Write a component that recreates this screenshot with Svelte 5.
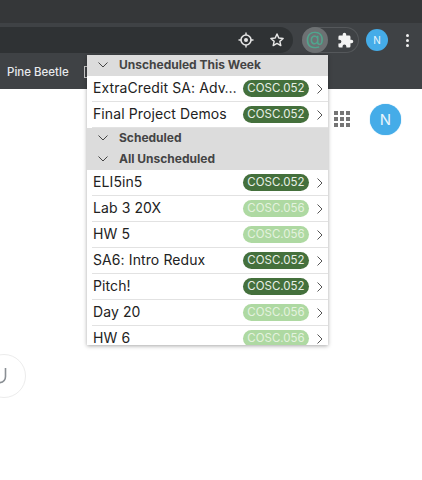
<script>
	const sectionA = [
		{ title: 'ExtraCredit SA: Adv…', course: '052' },
		{ title: 'Final Project Demos', course: '052' }
	];
	const sectionB = [
		{ title: 'ELI5in5', course: '052' },
		{ title: 'Lab 3 20X', course: '056' },
		{ title: 'HW 5', course: '056' },
		{ title: 'SA6: Intro Redux', course: '052' },
		{ title: 'Pitch!', course: '052' },
		{ title: 'Day 20', course: '056' },
		{ title: 'HW 6', course: '056' }
	];
</script>

{#snippet chevronDown()}
	<svg class="down" width="12" height="8" viewBox="0 0 12 8"><path d="M1.5 1.5 6 6l4.5-4.5" fill="none" stroke="#444" stroke-width="1" /></svg>
{/snippet}

{#snippet row(item)}
	<div class="row">
		<span class="title">{item.title}</span>
		<span class="badge" class:light={item.course === '056'}>COSC.{item.course}</span>
		<svg class="right" width="8" height="12" viewBox="0 0 8 12"><path d="M1.5 1.5 6 6l-4.5 4.5" fill="none" stroke="#555" stroke-width="1" /></svg>
	</div>
{/snippet}

<div class="page">
	<header class="chrome">
		<div class="tabstrip"></div>
		<div class="toolbar">
			<div class="omnibox">
				<span class="omni-btn">
					<svg width="18" height="18" viewBox="0 0 18 18" fill="none" stroke="#e6e6e6"><circle cx="9" cy="9" r="5" stroke-width="1.6" /><circle cx="9" cy="9" r="2" fill="#e6e6e6" stroke="none" /><path d="M9 1.5v2.5M9 14v2.5M1.5 9H4M14 9h2.5" stroke-width="1.4" /></svg>
				</span>
				<span class="omni-btn">
					<svg width="16" height="16" viewBox="0 0 24 24" fill="none" stroke="#e6e6e6" stroke-width="2.2"><path d="M12 3l2.7 6 6.5.7-4.9 4.3 1.4 6.4L12 17.1l-5.7 3.3 1.4-6.4-4.9-4.3 6.5-.7z" stroke-linejoin="round" /></svg>
				</span>
			</div>
			<div class="extensions">
				<span class="ext-at">@</span>
				<svg class="puzzle" width="17" height="17" viewBox="0 0 24 24" fill="#f4f4f4"><path d="M20.5 11H19V7a2 2 0 0 0-2-2h-4V3.5a2.5 2.5 0 0 0-5 0V5H4a2 2 0 0 0-2 2v3.8h1.5a2.7 2.7 0 0 1 0 5.4H2V20a2 2 0 0 0 2 2h3.8v-1.5a2.7 2.7 0 0 1 5.4 0V22H17a2 2 0 0 0 2-2v-4h1.5a2.5 2.5 0 0 0 0-5z" /></svg>
			</div>
			<span class="avatar small">N</span>
			<span class="kebab"><i></i><i></i><i></i></span>
		</div>
		<div class="bookmarks">
			<span>Pine Beetle</span>
			<span class="folder"></span>
		</div>
	</header>

	<main class="content">
		<div class="apps">
			{#each Array(9) as _}<i></i>{/each}
		</div>
		<span class="avatar big">N</span>
		<div class="fab">
			<svg width="12" height="24" viewBox="0 0 12 24" fill="none" stroke="#8a8f94" stroke-width="1.6"><path d="M10.5 4V12.5c0 4-3 6.5-9 6.5" /></svg>
		</div>
	</main>

	<div class="popup">
		<div class="head">{@render chevronDown()}<span>Unscheduled This Week</span></div>
		{#each sectionA as item}{@render row(item)}{/each}
		<div class="head">{@render chevronDown()}<span>Scheduled</span></div>
		<div class="head">{@render chevronDown()}<span>All Unscheduled</span></div>
		{#each sectionB as item}{@render row(item)}{/each}
	</div>
</div>

<style>
	:global(body) {
		background: #fff;
	}

	.page {
		position: relative;
		width: 422px;
		height: 480px;
		overflow: hidden;
		font-family: 'Inter', 'Liberation Sans', sans-serif;
	}

	.tabstrip {
		height: 23px;
		background: #353739;
	}

	.toolbar {
		height: 32px;
		box-sizing: border-box;
		padding: 4px 0 2px;
		display: flex;
		align-items: center;
		background: #3f4245;
	}

	.omnibox {
		width: 293px;
		height: 26px;
		box-sizing: border-box;
		padding-right: 2px;
		display: flex;
		justify-content: flex-end;
		align-items: center;
		gap: 3px;
		background: #2f3234;
		border-radius: 0 13px 13px 0;
	}

	.omni-btn {
		width: 28px;
		height: 26px;
		display: flex;
		align-items: center;
		justify-content: center;
	}

	.extensions {
		margin-left: 9px;
		width: 57px;
		height: 26px;
		box-sizing: border-box;
		border: 1px solid #55585b;
		border-left: none;
		border-radius: 13px;
		display: flex;
		align-items: center;
		gap: 9px;
	}

	.ext-at {
		width: 26px;
		height: 26px;
		border-radius: 50%;
		background: #6d7173;
		color: #4fa58e;
		font-size: 19px;
		line-height: 23px;
		text-align: center;
	}

	.avatar {
		border-radius: 50%;
		background: #45ace8;
		color: #e9f5fc;
		display: flex;
		align-items: center;
		justify-content: center;
		flex: none;
	}

	.avatar.small {
		margin-left: 7px;
		width: 22px;
		height: 22px;
		font-size: 10px;
	}

	.kebab {
		margin-left: 18px;
		display: flex;
		flex-direction: column;
		gap: 2px;
	}

	.kebab i {
		width: 3px;
		height: 3px;
		border-radius: 50%;
		background: #f0f0f0;
	}

	.bookmarks {
		height: 34px;
		box-sizing: border-box;
		padding-left: 7px;
		display: flex;
		align-items: center;
		gap: 15px;
		background: #3f4245;
		color: #e8eaed;
		font-size: 11.5px;
		font-weight: 500;
	}

	.folder {
		width: 10px;
		height: 12px;
		box-sizing: border-box;
		border: 1px solid #c8c8c8;
	}

	.content {
		position: relative;
		height: 391px;
	}

	.apps {
		position: absolute;
		left: 334px;
		top: 22px;
		display: grid;
		grid-template-columns: repeat(3, 4px);
		gap: 2px;
	}

	.apps i {
		height: 4px;
		background: #757575;
	}

	.avatar.big {
		position: absolute;
		left: 370px;
		top: 15px;
		width: 31px;
		height: 31px;
		font-size: 15px;
		box-shadow: 0 0 1px #45ace8;
	}

	.fab {
		position: absolute;
		left: -18px;
		top: 265px;
		width: 24px;
		height: 42px;
		padding-right: 18px;
		border: 1px solid #ececec;
		border-radius: 50%;
		display: flex;
		align-items: center;
		justify-content: flex-end;
	}

	.popup {
		position: absolute;
		left: 87px;
		top: 55px;
		width: 241px;
		height: 290px;
		overflow: hidden;
		background: #fff;
		box-shadow: 0 1px 4px rgba(0, 0, 0, 0.35);
	}

	.head {
		height: 21px;
		box-sizing: border-box;
		padding-bottom: 2px;
		display: flex;
		align-items: center;
		background: #dcdcdc;
		color: #444;
		font-size: 12px;
		font-weight: 700;
	}

	.down {
		margin: 0 10px 0 10px;
	}

	.row {
		height: 26px;
		box-sizing: border-box;
		margin-left: 5px;
		padding-left: 1px;
		display: flex;
		align-items: center;
		border-bottom: 1px solid #e2e2e2;
		color: #222;
	}

	.title {
		flex: 1;
		padding-bottom: 3px;
		font-size: 14px;
		letter-spacing: 0.1px;
		white-space: nowrap;
	}

	.badge {
		width: 66px;
		height: 17px;
		border-radius: 9px;
		background: #44703c;
		color: #e8efe6;
		font-size: 11.5px;
		line-height: 17px;
		text-align: center;
	}

	.badge.light {
		background: #aed9a2;
		color: #e4f2df;
	}

	.right {
		margin: 0 4px 0 7px;
	}
</style>
